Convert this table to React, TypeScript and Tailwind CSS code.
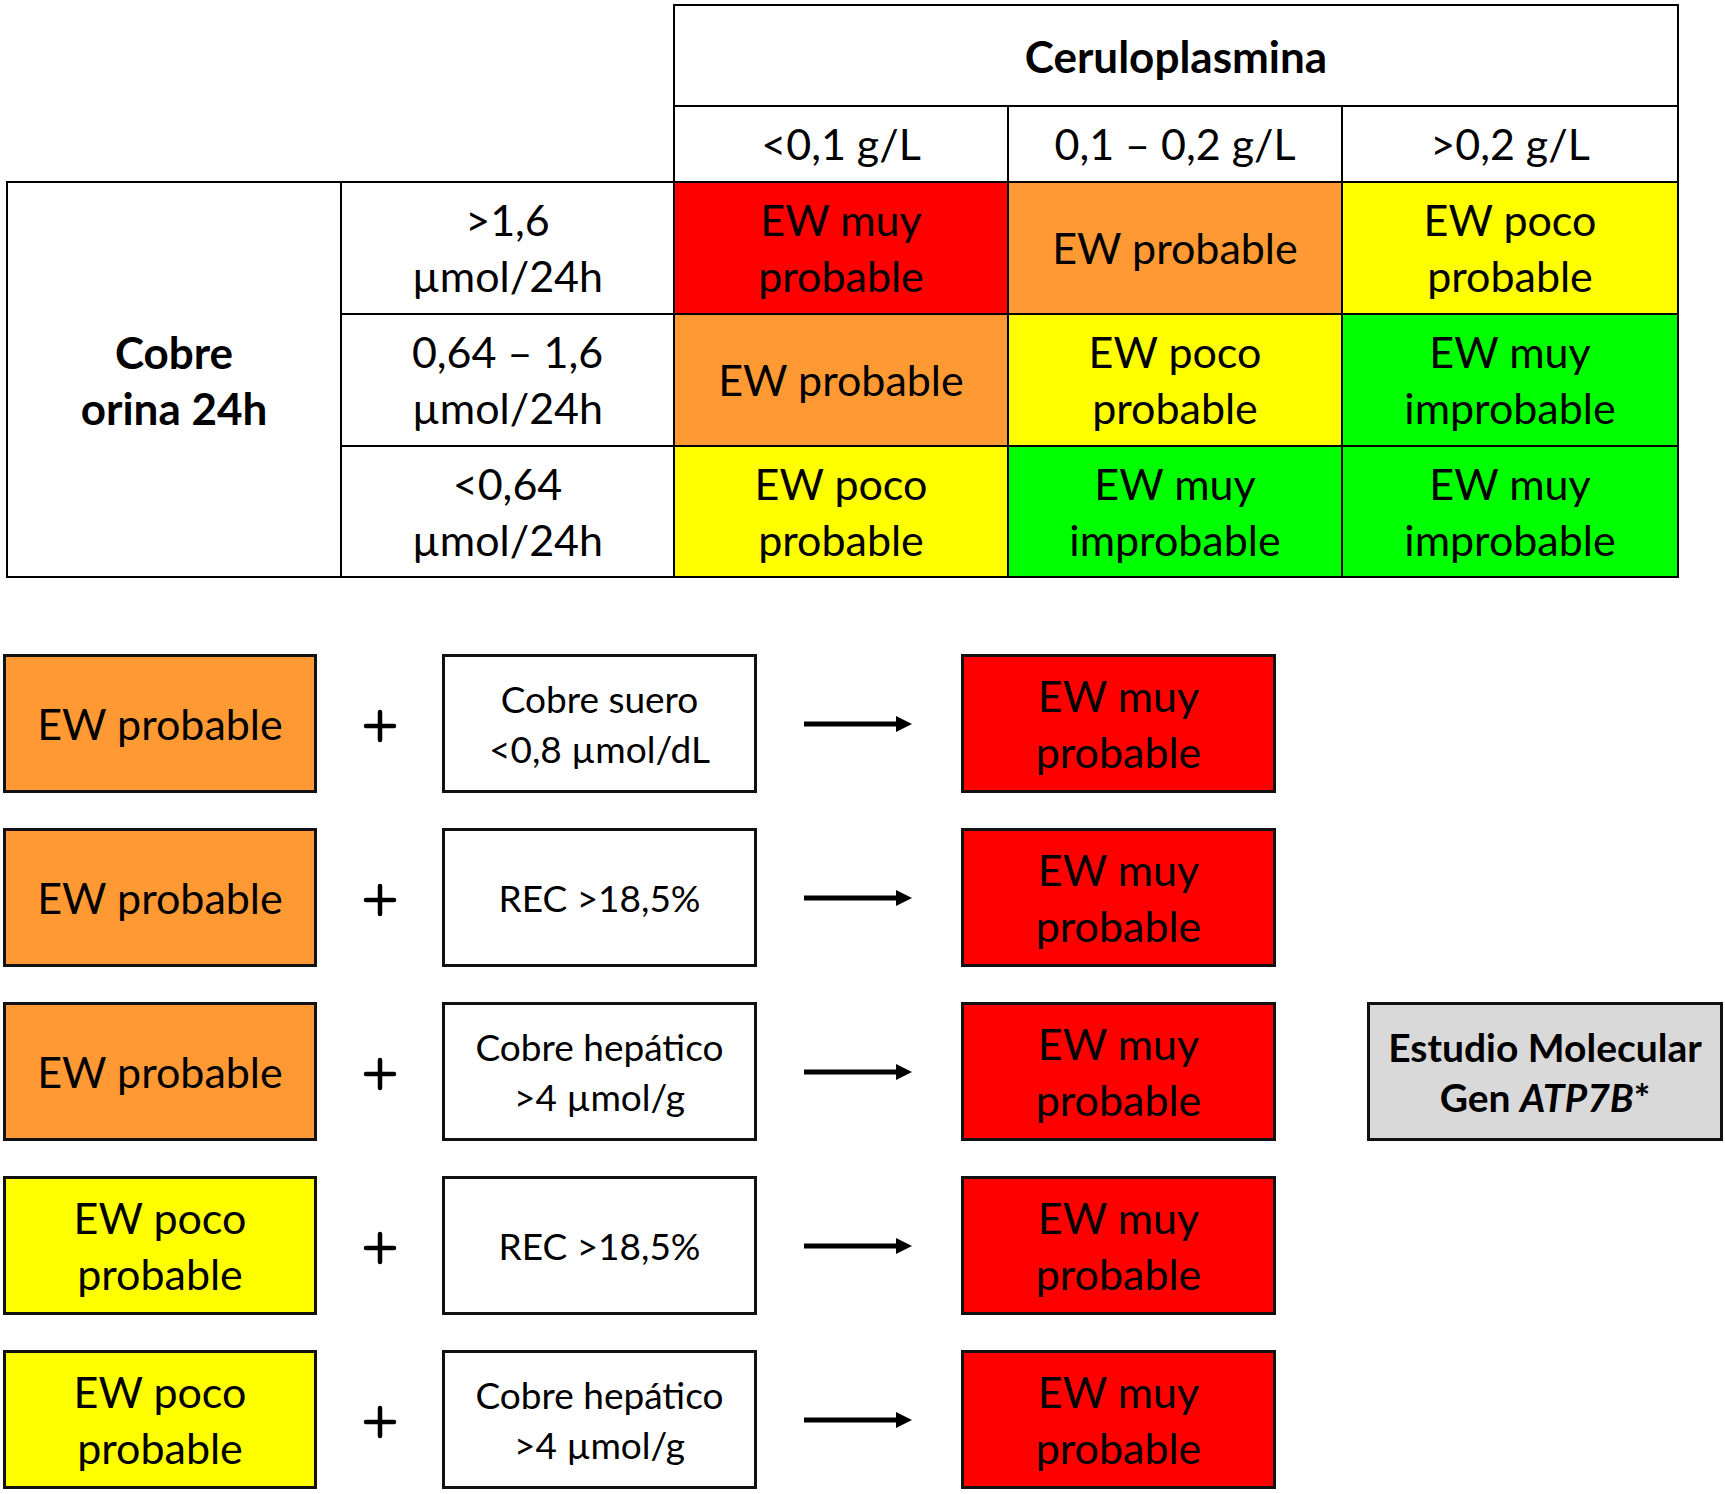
import React from "react";

const FONT = { fontFamily: "Lato, 'Open Sans', sans-serif" };

const colorClass: Record<string, string> = {
  red: "bg-[#ff0000]",
  orange: "bg-[#ff9933]",
  yellow: "bg-[#ffff00]",
  green: "bg-[#00ff00]",
};

const labels: Record<string, string[]> = {
  red: ["EW muy", "probable"],
  orange: ["EW probable"],
  yellow: ["EW poco", "probable"],
  green: ["EW muy", "improbable"],
};

function Lines({ lines }: { lines: string[] }) {
  return (
    <>
      {lines.map((l, i) => (
        <div key={i}>{l}</div>
      ))}
    </>
  );
}

const td = "border-2 border-black text-center align-middle p-0";

function Plus() {
  return (
    <svg width="34" height="34" viewBox="0 0 34 34">
      <line x1="3" y1="17" x2="31" y2="17" stroke="#000" strokeWidth="4.5" strokeLinecap="round" />
      <line x1="17" y1="3" x2="17" y2="31" stroke="#000" strokeWidth="4.5" strokeLinecap="round" />
    </svg>
  );
}

function Arrow() {
  return (
    <svg width="110" height="20" viewBox="0 0 110 20">
      <line x1="1" y1="10" x2="96" y2="10" stroke="#000" strokeWidth="5" />
      <polygon points="93,2 109,10 93,18" fill="#000" />
    </svg>
  );
}

function FlowRow({
  left,
  mid,
  extra,
}: {
  left: string;
  mid: string[];
  extra?: boolean;
}) {
  return (
    <div className="flex h-[139px] items-stretch">
      <div
        className={`ml-[3px] w-[314px] border-[3px] border-[#111] ${colorClass[left]} flex flex-col items-center justify-center text-[43px] leading-[56px] text-black`}
      >
        <Lines lines={labels[left]} />
      </div>
      <div className="flex w-[125px] items-center justify-center">
        <div className="mt-[4px]">
          <Plus />
        </div>
      </div>
      <div className="flex w-[315px] flex-col items-center justify-center border-[3px] border-[#111] bg-white text-[37px] leading-[50px] text-black">
        <Lines lines={mid} />
      </div>
      <div className="flex w-[204px] items-center justify-center">
        <div className="-ml-[2px]">
          <Arrow />
        </div>
      </div>
      <div className="flex w-[315px] flex-col items-center justify-center border-[3px] border-[#111] bg-[#ff0000] text-[43px] leading-[56px] text-black">
        <Lines lines={labels.red} />
      </div>
      {extra && (
        <div className="ml-[91px] flex w-[356px] flex-col items-center justify-center border-[3px] border-[#111] bg-[#d9d9d9] text-[39px] font-bold leading-[50px] text-black">
          <div>Estudio Molecular</div>
          <div>
            Gen <i>ATP7B</i>*
          </div>
        </div>
      )}
    </div>
  );
}

export default function App() {
  const body = [
    { label: [">1,6", "µmol/24h"], cells: ["red", "orange", "yellow"], h: "h-[132px]" },
    { label: ["0,64 – 1,6", "µmol/24h"], cells: ["orange", "yellow", "green"], h: "h-[132px]" },
    { label: ["<0,64", "µmol/24h"], cells: ["yellow", "green", "green"], h: "h-[131px]" },
  ];
  return (
    <div className="relative h-[1494px] w-[1725px] overflow-hidden bg-white text-black" style={FONT}>
      <div className="pt-[4px] pl-[6px]">
        <table className="w-[1671px] table-fixed border-collapse text-[43px] leading-[56px]">
          <colgroup>
            <col className="w-[334px]" />
            <col className="w-[333px]" />
            <col className="w-[334px]" />
            <col className="w-[334px]" />
            <col className="w-[336px]" />
          </colgroup>
          <tbody>
            <tr className="h-[101px]">
              <td colSpan={2} rowSpan={2} className="p-0"></td>
              <td colSpan={3} className={`${td} text-[44px] font-bold`}>
                Ceruloplasmina
              </td>
            </tr>
            <tr className="h-[76px]">
              <td className={td}>&lt;0,1 g/L</td>
              <td className={td}>0,1 – 0,2 g/L</td>
              <td className={td}>&gt;0,2 g/L</td>
            </tr>
            {body.map((r, i) => (
              <tr key={i} className={r.h}>
                {i === 0 && (
                  <td rowSpan={3} className={`${td} text-[44px] font-bold`}>
                    <div>Cobre</div>
                    <div>orina 24h</div>
                  </td>
                )}
                <td className={td}>
                  <Lines lines={r.label} />
                </td>
                {r.cells.map((c, j) => (
                  <td key={j} className={`${td} ${colorClass[c]}`}>
                    <Lines lines={labels[c]} />
                  </td>
                ))}
              </tr>
            ))}
          </tbody>
        </table>
      </div>

      <div className="mt-[76px] flex flex-col gap-[35px]">
        <FlowRow left="orange" mid={["Cobre suero", "<0,8 µmol/dL"]} />
        <FlowRow left="orange" mid={["REC >18,5%"]} />
        <FlowRow left="orange" mid={["Cobre hepático", ">4 µmol/g"]} extra />
        <FlowRow left="yellow" mid={["REC >18,5%"]} />
        <FlowRow left="yellow" mid={["Cobre hepático", ">4 µmol/g"]} />
      </div>
    </div>
  );
}
